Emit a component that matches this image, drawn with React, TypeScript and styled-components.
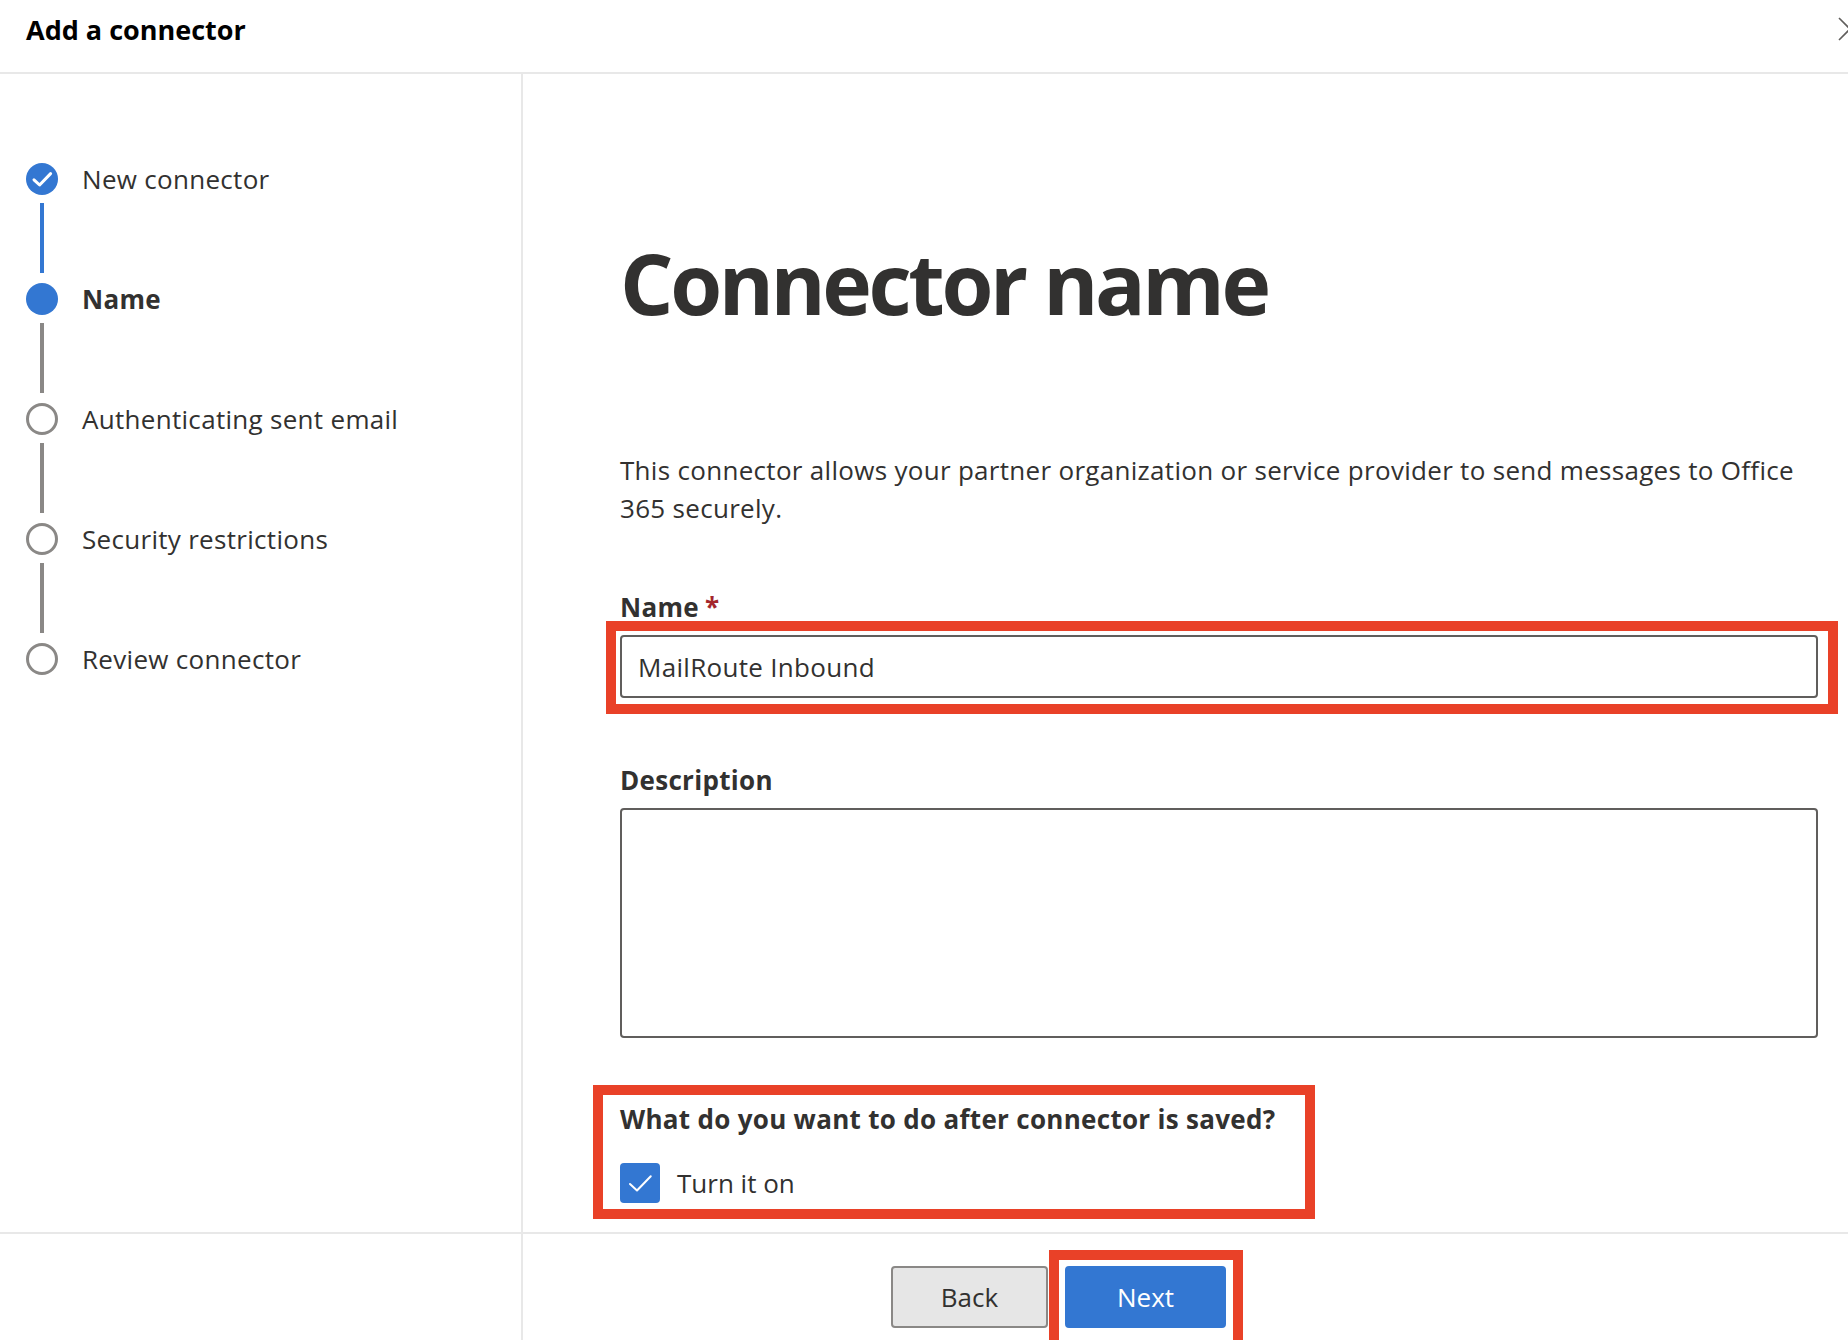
import React from "react";
import styled, { createGlobalStyle } from "styled-components";

const GlobalStyle = createGlobalStyle`
  html, body { margin: 0; padding: 0; background: #ffffff; }
  body {
    font-family: "Open Sans", "Noto Sans", "Liberation Sans", sans-serif;
    color: #323130;
    letter-spacing: 0.3px;
  }
  * { box-sizing: border-box; }
`;

const BLUE = "#3377d2";
const RED = "#e94128";
const DIVIDER = "#e8e8e8";

const Page = styled.div`
  width: 1848px;
  height: 1340px;
  overflow: hidden;
  display: flex;
  flex-direction: column;
  background: #fff;
`;

const Header = styled.header`
  flex: none;
  height: 74px;
  display: flex;
  justify-content: space-between;
  align-items: flex-start;
  padding: 12px 0 0 26px;
  border-bottom: 2px solid ${DIVIDER};
`;

const Title = styled.h1`
  margin: 0;
  font-size: 27px;
  line-height: 36px;
  font-weight: 700;
  letter-spacing: 0;
  color: #000;
`;

const CloseButton = styled.button`
  flex: none;
  width: 24px;
  height: 24px;
  margin: 5px -14px 0 0;
  padding: 0;
  border: 0;
  background: none;
  color: #605e5c;
  display: flex;
`;

const Body = styled.div`
  flex: 1;
  display: grid;
  grid-template-columns: 523px 1fr;
  grid-template-rows: 1fr 108px;
`;

const Sidebar = styled.nav`
  border-right: 2px solid ${DIVIDER};
  padding: 89px 0 0 26px;
`;

const StepList = styled.ol`
  list-style: none;
  margin: 0;
  padding: 0;
  display: flex;
  flex-direction: column;
`;

const StepItem = styled.li`
  display: flex;
  flex-direction: column;
`;

const StepRow = styled.div`
  display: flex;
  align-items: center;
  gap: 24px;
  height: 32px;
`;

type StepState = "done" | "current" | "pending";

const StepDot = styled.span<{ $state: StepState }>`
  flex: none;
  width: 32px;
  height: 32px;
  border-radius: 50%;
  display: flex;
  align-items: center;
  justify-content: center;
  background: ${(p) => (p.$state === "pending" ? "#fff" : BLUE)};
  border: ${(p) => (p.$state === "pending" ? "3px solid #8a8886" : "none")};
`;

const StepLabel = styled.span<{ $current?: boolean }>`
  font-size: 26px;
  line-height: 32px;
  font-weight: ${(p) => (p.$current ? 700 : 400)};
  color: #323130;
  white-space: nowrap;
`;

const StepLine = styled.span<{ $done?: boolean }>`
  display: block;
  width: 4px;
  height: 70px;
  margin: 8px 0 10px 14px;
  background: ${(p) => (p.$done ? BLUE : "#8a8886")};
`;

const Main = styled.main`
  padding: 158px 30px 0 97px;
  display: flex;
  flex-direction: column;
  align-items: stretch;
`;

const Heading = styled.h2`
  margin: 0;
  font-size: 84px;
  line-height: 101px;
  font-weight: 700;
  letter-spacing: -3.4px;
  color: #323130;
`;

const Intro = styled.p`
  margin: 118px 0 0;
  font-size: 26px;
  line-height: 38px;
  color: #323130;
`;

const Field = styled.div<{ $gap: number }>`
  margin-top: ${(p) => p.$gap}px;
  display: flex;
  flex-direction: column;
`;

const FieldLabel = styled.label`
  font-size: 26px;
  line-height: 36px;
  font-weight: 700;
  color: #323130;
`;

const Required = styled.span`
  color: #a4262c;
  margin-left: 6px;
`;

const Annotated = styled.div<{ $fit?: boolean }>`
  position: relative;
  align-self: ${(p) => (p.$fit ? "flex-start" : "stretch")};
`;

const Highlight = styled.span<{ $t: number; $r: number; $b: number; $l: number }>`
  position: absolute;
  top: ${(p) => p.$t}px;
  right: ${(p) => p.$r}px;
  bottom: ${(p) => p.$b}px;
  left: ${(p) => p.$l}px;
  border: 10px solid ${RED};
  pointer-events: none;
`;

const TextInput = styled.input`
  display: block;
  width: 100%;
  height: 63px;
  margin-top: 10px;
  padding: 0 16px;
  border: 2px solid #605e5c;
  border-radius: 4px;
  font-family: inherit;
  font-size: 26px;
  letter-spacing: 0.3px;
  color: #323130;
  background: #fff;
  outline: none;
`;

const TextArea = styled.textarea`
  display: block;
  width: 100%;
  height: 230px;
  margin-top: 10px;
  padding: 12px 16px;
  border: 2px solid #605e5c;
  border-radius: 4px;
  font-family: inherit;
  font-size: 26px;
  resize: none;
  background: #fff;
  outline: none;
`;

const AfterSave = styled.section`
  margin-top: 63px;
  display: flex;
  flex-direction: column;
`;

const SectionTitle = styled.h3`
  margin: 0;
  font-size: 26px;
  line-height: 36px;
  font-weight: 700;
  color: #323130;
  white-space: nowrap;
`;

const CheckRow = styled.label`
  margin-top: 26px;
  display: flex;
  align-items: center;
  gap: 17px;
  height: 40px;
`;

const CheckBox = styled.span`
  flex: none;
  width: 40px;
  height: 40px;
  border-radius: 4px;
  background: ${BLUE};
  display: flex;
  align-items: center;
  justify-content: center;
`;

const CheckText = styled.span`
  font-size: 26px;
  line-height: 40px;
  letter-spacing: 0;
  color: #323130;
`;

const FooterSide = styled.div`
  border-top: 2px solid ${DIVIDER};
  border-right: 2px solid ${DIVIDER};
`;

const Footer = styled.footer`
  border-top: 2px solid ${DIVIDER};
  padding: 32px 0 0 368px;
  display: flex;
  align-items: flex-start;
  gap: 17px;
`;

const Button = styled.button<{ $primary?: boolean }>`
  height: 62px;
  width: ${(p) => (p.$primary ? 161 : 157)}px;
  border-radius: 4px;
  border: 2px solid ${(p) => (p.$primary ? BLUE : "#8a8886")};
  background: ${(p) => (p.$primary ? BLUE : "#e6e6e6")};
  color: ${(p) => (p.$primary ? "#fff" : "#323130")};
  font-family: inherit;
  font-size: 26px;
  font-weight: 400;
  padding: 0;
  cursor: pointer;
`;

const CheckMark = ({ size, stroke }: { size: number; stroke: number }) => (
  <svg width={size} height={size} viewBox="0 0 32 32" fill="none">
    <path d="M8 16.8 L13.6 22 L24.6 10.6" stroke="#fff" strokeWidth={stroke} strokeLinecap="round" strokeLinejoin="round" />
  </svg>
);

const steps: { label: string; state: StepState }[] = [
  { label: "New connector", state: "done" },
  { label: "Name", state: "current" },
  { label: "Authenticating sent email", state: "pending" },
  { label: "Security restrictions", state: "pending" },
  { label: "Review connector", state: "pending" },
];

export default function App() {
  return (
    <>
      <GlobalStyle />
      <Page>
        <Header>
          <Title>Add a connector</Title>
          <CloseButton aria-label="Close">
            <svg width="24" height="24" viewBox="0 0 24 24" fill="none">
              <path d="M1 1 L23 23 M23 1 L1 23" stroke="currentColor" strokeWidth="1.6" />
            </svg>
          </CloseButton>
        </Header>
        <Body>
          <Sidebar>
            <StepList>
              {steps.map((s, i) => (
                <StepItem key={s.label}>
                  <StepRow>
                    <StepDot $state={s.state}>
                      {s.state === "done" && <CheckMark size={32} stroke={3} />}
                    </StepDot>
                    <StepLabel $current={s.state === "current"}>{s.label}</StepLabel>
                  </StepRow>
                  {i < steps.length - 1 && <StepLine $done={s.state === "done"} />}
                </StepItem>
              ))}
            </StepList>
          </Sidebar>
          <Main>
            <Heading>Connector name</Heading>
            <Intro>
              This connector allows your partner organization or service provider to send messages to Office 365 securely.
            </Intro>
            <Field $gap={62}>
              <FieldLabel htmlFor="connector-name">
                Name<Required>*</Required>
              </FieldLabel>
              <Annotated>
                <TextInput id="connector-name" defaultValue="MailRoute Inbound" />
                <Highlight $t={-4} $r={-20} $b={-16} $l={-14} />
              </Annotated>
            </Field>
            <Field $gap={64}>
              <FieldLabel htmlFor="connector-desc">Description</FieldLabel>
              <TextArea id="connector-desc" />
            </Field>
            <Annotated $fit>
              <AfterSave>
                <SectionTitle>What do you want to do after connector is saved?</SectionTitle>
                <CheckRow>
                  <CheckBox>
                    <CheckMark size={40} stroke={1.6} />
                  </CheckBox>
                  <CheckText>Turn it on</CheckText>
                </CheckRow>
              </AfterSave>
              <Highlight $t={47} $r={-40} $b={-16} $l={-27} />
            </Annotated>
          </Main>
          <FooterSide />
          <Footer>
            <Button>Back</Button>
            <Annotated>
              <Button $primary>Next</Button>
              <Highlight $t={-16} $r={-17} $b={-13} $l={-16} />
            </Annotated>
          </Footer>
        </Body>
      </Page>
    </>
  );
}
